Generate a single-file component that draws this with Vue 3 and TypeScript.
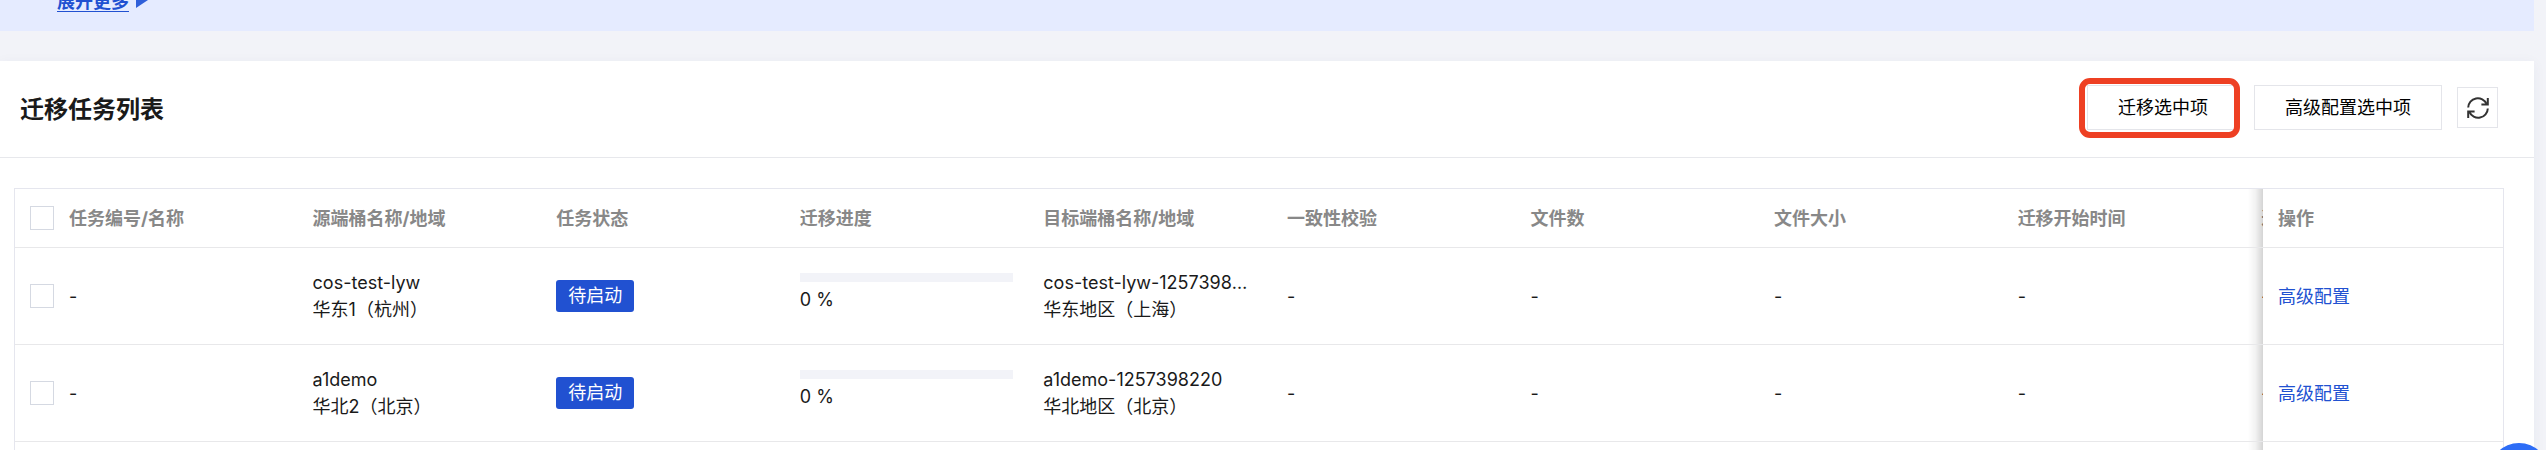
<script setup lang="ts">
import { ref } from 'vue'

interface Task {
  id: number
  name: string
  source: string
  sourceRegion: string
  status: string
  progress: number
  target: string
  targetRegion: string
}

const columns: string[] = [
  '任务编号/名称',
  '源端桶名称/地域',
  '任务状态',
  '迁移进度',
  '目标端桶名称/地域',
  '一致性校验',
  '文件数',
  '文件大小',
  '迁移开始时间',
  '迁移结束时间',
]

const tasks: Task[] = [
  {
    id: 1,
    name: '-',
    source: 'cos-test-lyw',
    sourceRegion: '华东1（杭州）',
    status: '待启动',
    progress: 0,
    target: 'cos-test-lyw-1257398220',
    targetRegion: '华东地区（上海）',
  },
  {
    id: 2,
    name: '-',
    source: 'a1demo',
    sourceRegion: '华北2（北京）',
    status: '待启动',
    progress: 0,
    target: 'a1demo-1257398220',
    targetRegion: '华北地区（北京）',
  },
]

const selected = ref<number[]>([])

function toggleAll(event: Event) {
  const checked = (event.target as HTMLInputElement).checked
  selected.value = checked ? tasks.map((t) => t.id) : []
}
</script>

<template>
  <div class="page">
    <div class="notice">
      <a class="more" href="#">展开更多</a>
      <svg class="caret" viewBox="0 0 12 16" aria-hidden="true"><path d="M0 0 L12 8 L0 16 Z" /></svg>
    </div>

    <section class="card">
      <header class="head">
        <h2>迁移任务列表</h2>
        <div class="tools">
          <button type="button" class="btn marked">迁移选中项</button>
          <button type="button" class="btn">高级配置选中项</button>
          <button type="button" class="icon-btn" aria-label="刷新">
            <svg viewBox="0 0 22 22" aria-hidden="true">
              <path d="M1.2 10.6 A9.6 9.6 0 0 1 19.6 7" />
              <path d="M20.8 1 V7.4 H14.4" />
              <path d="M20.8 11.4 A9.6 9.6 0 0 1 2.4 15" />
              <path d="M1.2 21 V14.6 H7.6" />
            </svg>
          </button>
        </div>
      </header>

      <div class="table-box">
        <table>
          <colgroup>
            <col class="col-check" />
            <col v-for="c in columns" :key="c" />
            <col class="col-action" />
          </colgroup>
          <thead>
            <tr>
              <th class="check">
                <input type="checkbox" aria-label="全选" :checked="selected.length === tasks.length" @change="toggleAll" />
              </th>
              <th v-for="c in columns" :key="c" scope="col">{{ c }}</th>
              <th class="fixed" scope="col">操作</th>
            </tr>
          </thead>
          <tbody>
            <tr v-for="t in tasks" :key="t.id">
              <td class="check">
                <input v-model="selected" type="checkbox" :value="t.id" :aria-label="'选择 ' + t.source" />
              </td>
              <td>{{ t.name }}</td>
              <td>
                <div class="line">{{ t.source }}</div>
                <div class="line">{{ t.sourceRegion }}</div>
              </td>
              <td><span class="tag">{{ t.status }}</span></td>
              <td>
                <div class="progress">
                  <div class="track"><div class="bar" :style="{ width: t.progress + '%' }"></div></div>
                  <div class="line">{{ t.progress }} %</div>
                </div>
              </td>
              <td>
                <div class="line">{{ t.target }}</div>
                <div class="line">{{ t.targetRegion }}</div>
              </td>
              <td>-</td>
              <td>-</td>
              <td>-</td>
              <td>-</td>
              <td>-</td>
              <td class="fixed"><a href="#">高级配置</a></td>
            </tr>
            <tr class="blank">
              <td :colspan="columns.length + 1"></td>
              <td class="fixed"></td>
            </tr>
          </tbody>
        </table>
      </div>
    </section>

    <button type="button" class="fab" aria-label="帮助"></button>
  </div>
</template>

<style>
body {
  margin: 0;
  background: #f2f3f8;
}
</style>

<style scoped>
.page {
  height: 100vh;
  box-sizing: border-box;
  padding-right: 12px;
  overflow: hidden;
  display: flex;
  flex-direction: column;
  gap: 30px;
  background: #f2f3f8;
  color: #1a1a1a;
  font: 18px/27px Inter, "Noto Sans CJK SC", sans-serif;
}
.notice {
  flex: none;
  height: 31px;
  box-sizing: border-box;
  padding: 0 57px 16px;
  display: flex;
  align-items: flex-end;
  gap: 7px;
  overflow: hidden;
  background: #e5ebff;
}
.more {
  color: #2151d1;
  font-weight: 700;
  line-height: 27px;
  text-decoration: underline;
  text-decoration-thickness: 1px;
  text-underline-offset: 3px;
}
.caret {
  width: 12px;
  height: 16px;
  margin-bottom: 7px;
  fill: #2f5fd9;
}
.card {
  flex: 1;
  background: #fff;
  box-shadow: 0 2px 12px rgba(40, 50, 90, 0.05);
}
.head {
  display: flex;
  align-items: center;
  justify-content: space-between;
  height: 96px;
  padding: 0 36px 0 20px;
  border-bottom: 1px solid #e7e8ec;
}
h2 {
  margin: 2px 0 0;
  font-size: 24px;
  line-height: 36px;
  font-weight: 700;
}
.tools {
  display: flex;
  align-items: center;
  gap: 15px;
  margin-bottom: 3px;
}
.btn,
.icon-btn {
  box-sizing: border-box;
  border: 1px solid #e4e5ea;
  background: #fff;
  color: #000;
  font: inherit;
  cursor: pointer;
}
.btn {
  position: relative;
  height: 45px;
  padding: 0 30px;
}
.marked::after {
  content: "";
  position: absolute;
  inset: -8px -2px -9px -9px;
  border: 6px solid #ee4023;
  border-radius: 11px;
  pointer-events: none;
}
.icon-btn {
  display: grid;
  place-items: center;
  width: 41px;
  height: 41px;
  padding: 0;
}
.icon-btn svg {
  width: 22px;
  height: 22px;
  fill: none;
  stroke: #333;
  stroke-width: 2;
}
.table-box {
  margin: 30px 30px 0 14px;
  border: 1px solid #e5e6ee;
  overflow-x: auto;
}
table {
  width: calc(109% + 3px);
  table-layout: fixed;
  border-collapse: separate;
  border-spacing: 0;
}
.col-check {
  width: 39px;
}
.col-action {
  width: 240px;
}
th,
td {
  box-sizing: border-box;
  padding: 0 15px;
  border-bottom: 1px solid #e8e8ea;
  text-align: left;
  vertical-align: middle;
}
th {
  height: 59px;
  color: #888;
  font-weight: 700;
  white-space: nowrap;
}
td {
  height: 97px;
}
.blank td {
  height: 59px;
}
.check {
  padding-right: 0;
}
input[type="checkbox"] {
  display: block;
  appearance: none;
  width: 24px;
  height: 24px;
  margin: 0;
  border: 1px solid #d5d9e2;
  background: #fff;
}
input[type="checkbox"]:checked {
  border-color: #2151d1;
  background: #2151d1;
}
.fixed {
  position: sticky;
  right: 0;
  background: #fff;
}
.fixed::before {
  content: "";
  position: absolute;
  top: 0;
  bottom: 0;
  right: 100%;
  width: 15px;
  background: linear-gradient(to left, rgba(0, 0, 0, 0.17), rgba(0, 0, 0, 0.05) 50%, transparent);
}
.fixed a {
  color: #2151d1;
  text-decoration: none;
}
.line {
  overflow: hidden;
  white-space: nowrap;
  text-overflow: ellipsis;
}
.tag {
  display: inline-block;
  padding: 0 12px;
  border-radius: 3px;
  background: #2151d1;
  color: #fff;
  line-height: 32px;
  vertical-align: middle;
}
.progress {
  padding-bottom: 6px;
}
.track {
  height: 9px;
  margin-bottom: 4px;
  background: #f2f3f8;
}
.bar {
  height: 100%;
  background: #2151d1;
}
.fab {
  position: fixed;
  right: -3px;
  bottom: -53px;
  width: 60px;
  height: 60px;
  padding: 0;
  border: 0;
  border-radius: 50%;
  background: #2d6df6;
}
</style>
